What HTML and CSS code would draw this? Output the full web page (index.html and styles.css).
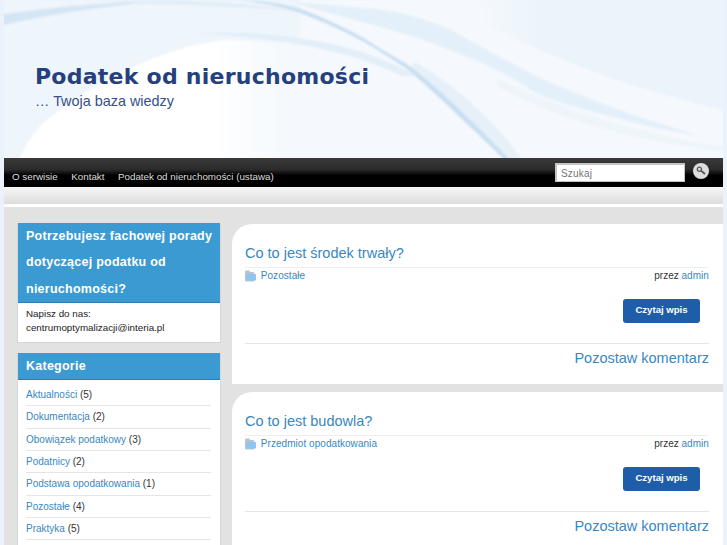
FILE: index.html
```html
<!DOCTYPE html><html lang="pl">
<head>
  <meta charset="UTF-8">
  <meta name="viewport" content="width=device-width, initial-scale=1.0">
  <title>Podatek od nieruchomości</title>
  <link rel="stylesheet" href="styles.css">
</head>
<body>
  <div class="wrapper">
    <header class="header">
      <!-- wave artwork, coordinates are relative to the page -->
      <svg class="waves" width="719" height="158" viewBox="4 0 719 158">
        <defs>
          <filter id="soft"><feGaussianBlur stdDeviation="1"/></filter>
          <linearGradient id="glow" x1="0" x2="1" y1="0" y2="0">
            <stop offset=".75" stop-color="#fff"/>
            <stop offset="1" stop-color="#f6fafd"/>
          </linearGradient>
          <linearGradient id="sky" x1="0" x2="1" y1="0" y2="0">
            <stop offset="0" stop-color="#f5f9fd"/>
            <stop offset=".25" stop-color="#ebf3fb"/>
          </linearGradient>
        </defs>
        <g filter="url(#soft)">
          <path d="M0 0 H730 V165 H0 Z" fill="#f5f9fd"/>
          <path d="M480 0 H730 V112 C650 92 580 72 480 22 Z" fill="url(#sky)"/>
          <path d="M0 0 H300 V42 H230 C170 45 100 77 43 123 C32 135 24 147 17 165 H0 Z" fill="#eef5fb"/>
          <path d="M17 165 C24 147 32 135 43 123 C100 77 170 45 227 40 C250 40 262 42 275 46 V165 Z" fill="url(#glow)"/>
          <path d="M0 15 C50 7 100 3 160 1 C90 8 40 16 0 26 Z" fill="#d4e5f4"/>
          <path d="M100 2 C170 -1 240 1 300 12 C250 6 170 4 100 2 Z" fill="#e0ecf7"/>
          <path d="M364 8 C400 10 440 22 464 37 C490 52 510 62 531 73 C560 88 620 112 700 136 C660 130 630 122 597 113 C570 105 545 100 531 90 C510 76 480 60 431 43 C410 35 385 28 364 23 C340 16 310 8 290 2 C320 4 345 6 364 8 Z" fill="#e4f0f9"/>
          <path d="M497 78 C560 110 640 134 730 148 V152 C640 142 560 122 497 86 Z" fill="#edf5fb"/>
          <path d="M196 33 C250 30 320 38 364 53 C385 60 400 66 415 76 L402 76 C385 68 370 62 350 56 C300 42 250 36 196 33 Z" fill="#e2eef8"/>
          <path d="M407 70 C430 88 448 102 464 118 C480 132 495 146 508 165 H525 C510 140 490 120 470 102 C450 84 432 72 415 62 Z" fill="#e6f0f9"/>
          <path d="M240 0 C265 3 285 8 300 13 C325 22 345 32 364 42 C375 48 390 58 407 69 C430 88 465 122 510 165 H515 C470 118 435 85 407 64 C390 54 375 46 364 38 C345 28 325 18 304 10 C285 4 265 1 240 0 Z" fill="#c9dff2"/>
        </g>
      </svg>
      <h1 class="site-title">Podatek od nieruchomości</h1>
      <p class="site-desc">… Twoja baza wiedzy</p>
    </header>

    <nav class="nav">
      <ul class="menu">
        <li><a href="#">O serwisie</a></li>
        <li><a href="#">Kontakt</a></li>
        <li><a href="#">Podatek od nieruchomości (ustawa)</a></li>
      </ul>
      <form class="search">
        <input type="text" placeholder="Szukaj">
        <button type="button" class="search-btn" aria-label="Szukaj">
          <svg width="10" height="10" viewBox="0 0 10 10"><circle cx="3.4" cy="3.2" r="2.1" fill="none" stroke="#555" stroke-width="1.3"/><path d="M5.1 4.8 L9 8" stroke="#555" stroke-width="1.8"/></svg>
        </button>
      </form>
    </nav>
    <div class="strip"></div>

    <div class="content">
      <aside class="sidebar">
        <section class="widget">
          <h3>Potrzebujesz fachowej porady dotyczącej podatku od nieruchomości?</h3>
          <p class="widget-text">Napisz do nas:<br>centrumoptymalizacji@interia.pl</p>
        </section>
        <section class="widget">
          <h3>Kategorie</h3>
          <ul class="cats">
            <li><a href="#">Aktualności</a> (5)</li>
            <li><a href="#">Dokumentacja</a> (2)</li>
            <li><a href="#">Obowiązek podatkowy</a> (3)</li>
            <li><a href="#">Podatnicy</a> (2)</li>
            <li><a href="#">Podstawa opodatkowania</a> (1)</li>
            <li><a href="#">Pozostałe</a> (4)</li>
            <li><a href="#">Praktyka</a> (5)</li>
            <li></li>
          </ul>
        </section>
      </aside>

      <main class="posts">
        <article class="post">
          <h2><a href="#">Co to jest środek trwały?</a></h2>
          <div class="meta">
            <span class="cat">
              <svg width="11" height="12" viewBox="0 0 11 12"><path d="M0 1.5 Q0 .5 1 .5 H4 L5.5 2 H9 V11.5 H1 Q0 11.5 0 10.5 Z" fill="#b4c4d3"/><rect x="1.5" y="4" width="9.5" height="6.5" rx=".5" fill="#8cc6ef"/></svg>
              <a href="#">Pozostałe</a>
            </span>
            <span>przez <a href="#">admin</a></span>
          </div>
          <div class="more"><a class="more-btn" href="#">Czytaj wpis</a></div>
          <div class="comments"><a href="#">Pozostaw komentarz</a></div>
        </article>
        <article class="post">
          <h2><a href="#">Co to jest budowla?</a></h2>
          <div class="meta">
            <span class="cat">
              <svg width="11" height="12" viewBox="0 0 11 12"><path d="M0 1.5 Q0 .5 1 .5 H4 L5.5 2 H9 V11.5 H1 Q0 11.5 0 10.5 Z" fill="#b4c4d3"/><rect x="1.5" y="4" width="9.5" height="6.5" rx=".5" fill="#8cc6ef"/></svg>
              <a href="#">Przedmiot opodatkowania</a>
            </span>
            <span>przez <a href="#">admin</a></span>
          </div>
          <div class="more"><a class="more-btn" href="#">Czytaj wpis</a></div>
          <div class="comments"><a href="#">Pozostaw komentarz</a></div>
        </article>
      </main>
    </div>
  </div>
</body>
</html>
```

FILE: styles.css
```css
html, body {
  height: 545px;
  overflow: hidden;
}
body {
  margin: 0;
  background-color: #eaf3fb;
  font-family: "Liberation Sans", sans-serif;
  font-size: 10px;
  color: #333;
}
a {
  color: #3a87c0;
  text-decoration: none;
}
.wrapper {
  width: 719px;
  margin-left: 4px;
}
.header {
  position: relative;
  height: 158px;
  box-sizing: border-box;
  padding: 62px 0 0 31px;
  overflow: hidden;
}
.waves {
  position: absolute;
  left: 0;
  top: 0;
}
.site-title {
  position: relative;
  margin: 0;
  font-family: "DejaVu Sans", sans-serif;
  font-size: 22px;
  letter-spacing: .25px;
  line-height: 30px;
  color: #25407c;
}
.site-desc {
  position: relative;
  margin: 0;
  font-size: 14.4px;
  line-height: 18px;
  color: #35508a;
}
.nav {
  display: flex;
  justify-content: space-between;
  height: 29px;
  background: linear-gradient(#3a3a3a, #2a2a2a 40%, #000 60%, #000);
}
.menu {
  display: flex;
  gap: 13.5px;
  margin: 0;
  padding: 13px 0 0 8px;
  list-style: none;
}
.menu a {
  color: #ddd;
  font-size: 9.8px;
}
.search {
  display: flex;
  align-items: flex-start;
  gap: 8px;
  padding: 5px 14px 0 0;
}
.search input {
  width: 130px;
  height: 19px;
  box-sizing: border-box;
  padding: 0 4px;
  border: 2px solid #c4c4c4;
  border-bottom-width: 1px;
  border-right-width: 1px;
  background: #fff;
  font-family: "Liberation Sans", sans-serif;
  font-size: 10px;
  letter-spacing: .2px;
}
.search-btn {
  display: flex;
  align-items: center;
  justify-content: center;
  width: 16px;
  height: 16px;
  padding: 0;
  border: none;
  border-radius: 50%;
  background: #ddd;
}
.strip {
  height: 17px;
  border-bottom: 3px solid #fff;
  background: linear-gradient(#f7f7f7, #dcdcdc);
}
.content {
  display: flex;
  gap: 11px;
  align-items: flex-start;
  height: 338px;
  box-sizing: border-box;
  padding: 16px 0 0 13px;
  background: #e2e2e2;
  overflow: hidden;
}
.sidebar {
  flex: none;
  width: 204px;
}
.widget {
  margin-bottom: 10px;
  background: #fff;
  border: 1px solid #d6d6d6;
  border-top: none;
}
.widget h3 {
  margin: 0;
  padding: 0 4px 0 8px;
  background: #3c9ad2;
  border-bottom: 1px solid #2b7db5;
  color: #fff;
  font-size: 12.5px;
  letter-spacing: .25px;
  line-height: 26.3px;
}
.widget-text {
  margin: 0;
  padding: 4px 8px 7px;
  font-size: 9.8px;
  line-height: 14px;
  color: #222;
}
.cats {
  margin: 0;
  padding: 4px 9px 0 8px;
  list-style: none;
}
.cats li {
  padding: 4px 0;
  height: 13.3px;
  line-height: 14px;
  border-bottom: 1px solid #e6e6e6;
}
.posts {
  flex: 1;
  padding-top: 1px;
}
.post {
  height: 160px;
  box-sizing: border-box;
  margin-bottom: 8px;
  padding: 20px 14px 0 13px;
  background: #fff;
  border-radius: 20px 0 0 0;
}
.post h2 {
  margin: 0;
  padding-bottom: 5px;
  border-bottom: 1px solid #eee;
  font-weight: normal;
  font-size: 14.5px;
  line-height: 18px;
}
.meta {
  display: flex;
  justify-content: space-between;
  padding-top: 1px;
  line-height: 13px;
}
.cat svg {
  vertical-align: -3px;
  margin-right: 2px;
}
.meta a {
  letter-spacing: .05px;
}
.more {
  display: flex;
  justify-content: flex-end;
  padding: 17px 9px 0 0;
  height: 62px;
  box-sizing: border-box;
  border-bottom: 1px solid #e6e6e6;
}
.more-btn {
  width: 77px;
  height: 24px;
  border-radius: 3px;
  background: #1e5ea8;
  color: #fff;
  font-size: 9.6px;
  font-weight: bold;
  line-height: 21px;
  text-align: center;
}
.comments {
  padding-top: 4px;
  text-align: right;
  font-size: 14.5px;
  line-height: 20px;
}
```
